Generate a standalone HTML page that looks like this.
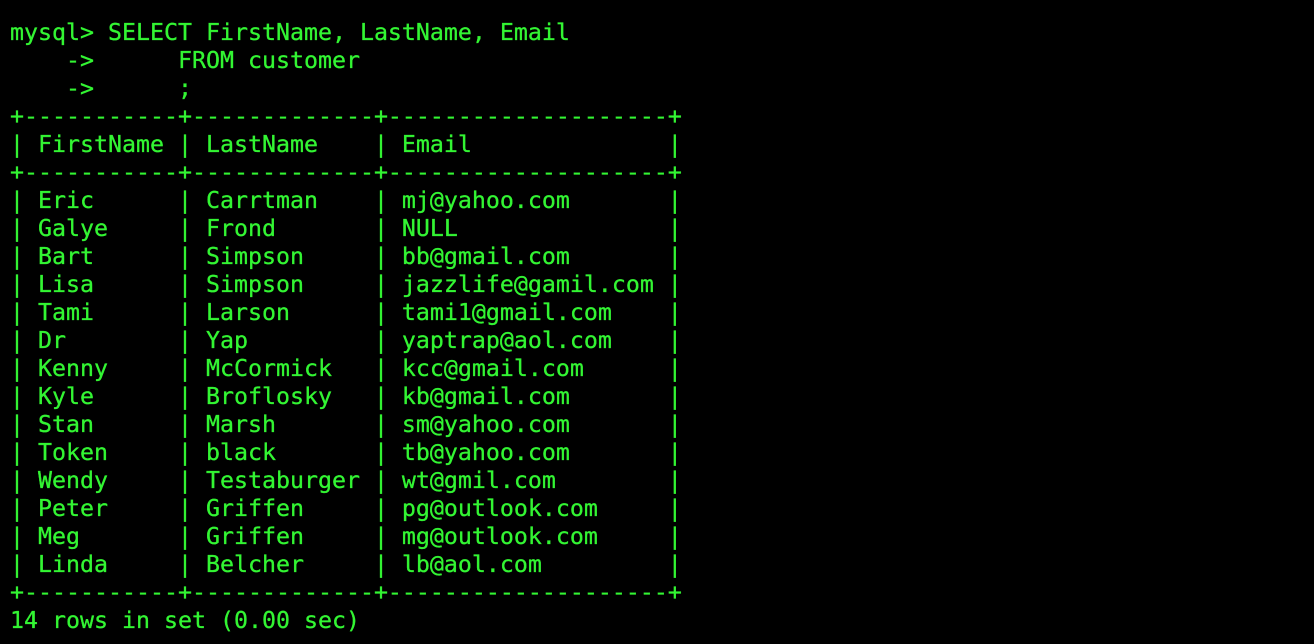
<!DOCTYPE html>
<html><head><meta charset="utf-8"><style>
html,body{margin:0;padding:0;background:#000;width:1314px;height:644px;overflow:hidden}
pre{margin:0;position:absolute;left:10px;top:19px;font-family:"DejaVu Sans Mono","Liberation Mono",monospace;font-size:23.25px;line-height:28px;color:#33f533;-webkit-text-stroke:0.3px #33f533;}
</style></head><body><pre>mysql&gt; SELECT FirstName, LastName, Email
    -&gt;      FROM customer
    -&gt;      ;
+-----------+-------------+--------------------+
| FirstName | LastName    | Email              |
+-----------+-------------+--------------------+
| Eric      | Carrtman    | mj@yahoo.com       |
| Galye     | Frond       | NULL               |
| Bart      | Simpson     | bb@gmail.com       |
| Lisa      | Simpson     | jazzlife@gamil.com |
| Tami      | Larson      | tami1@gmail.com    |
| Dr        | Yap         | yaptrap@aol.com    |
| Kenny     | McCormick   | kcc@gmail.com      |
| Kyle      | Broflosky   | kb@gmail.com       |
| Stan      | Marsh       | sm@yahoo.com       |
| Token     | black       | tb@yahoo.com       |
| Wendy     | Testaburger | wt@gmil.com        |
| Peter     | Griffen     | pg@outlook.com     |
| Meg       | Griffen     | mg@outlook.com     |
| Linda     | Belcher     | lb@aol.com         |
+-----------+-------------+--------------------+
14 rows in set (0.00 sec)</pre></body></html>
